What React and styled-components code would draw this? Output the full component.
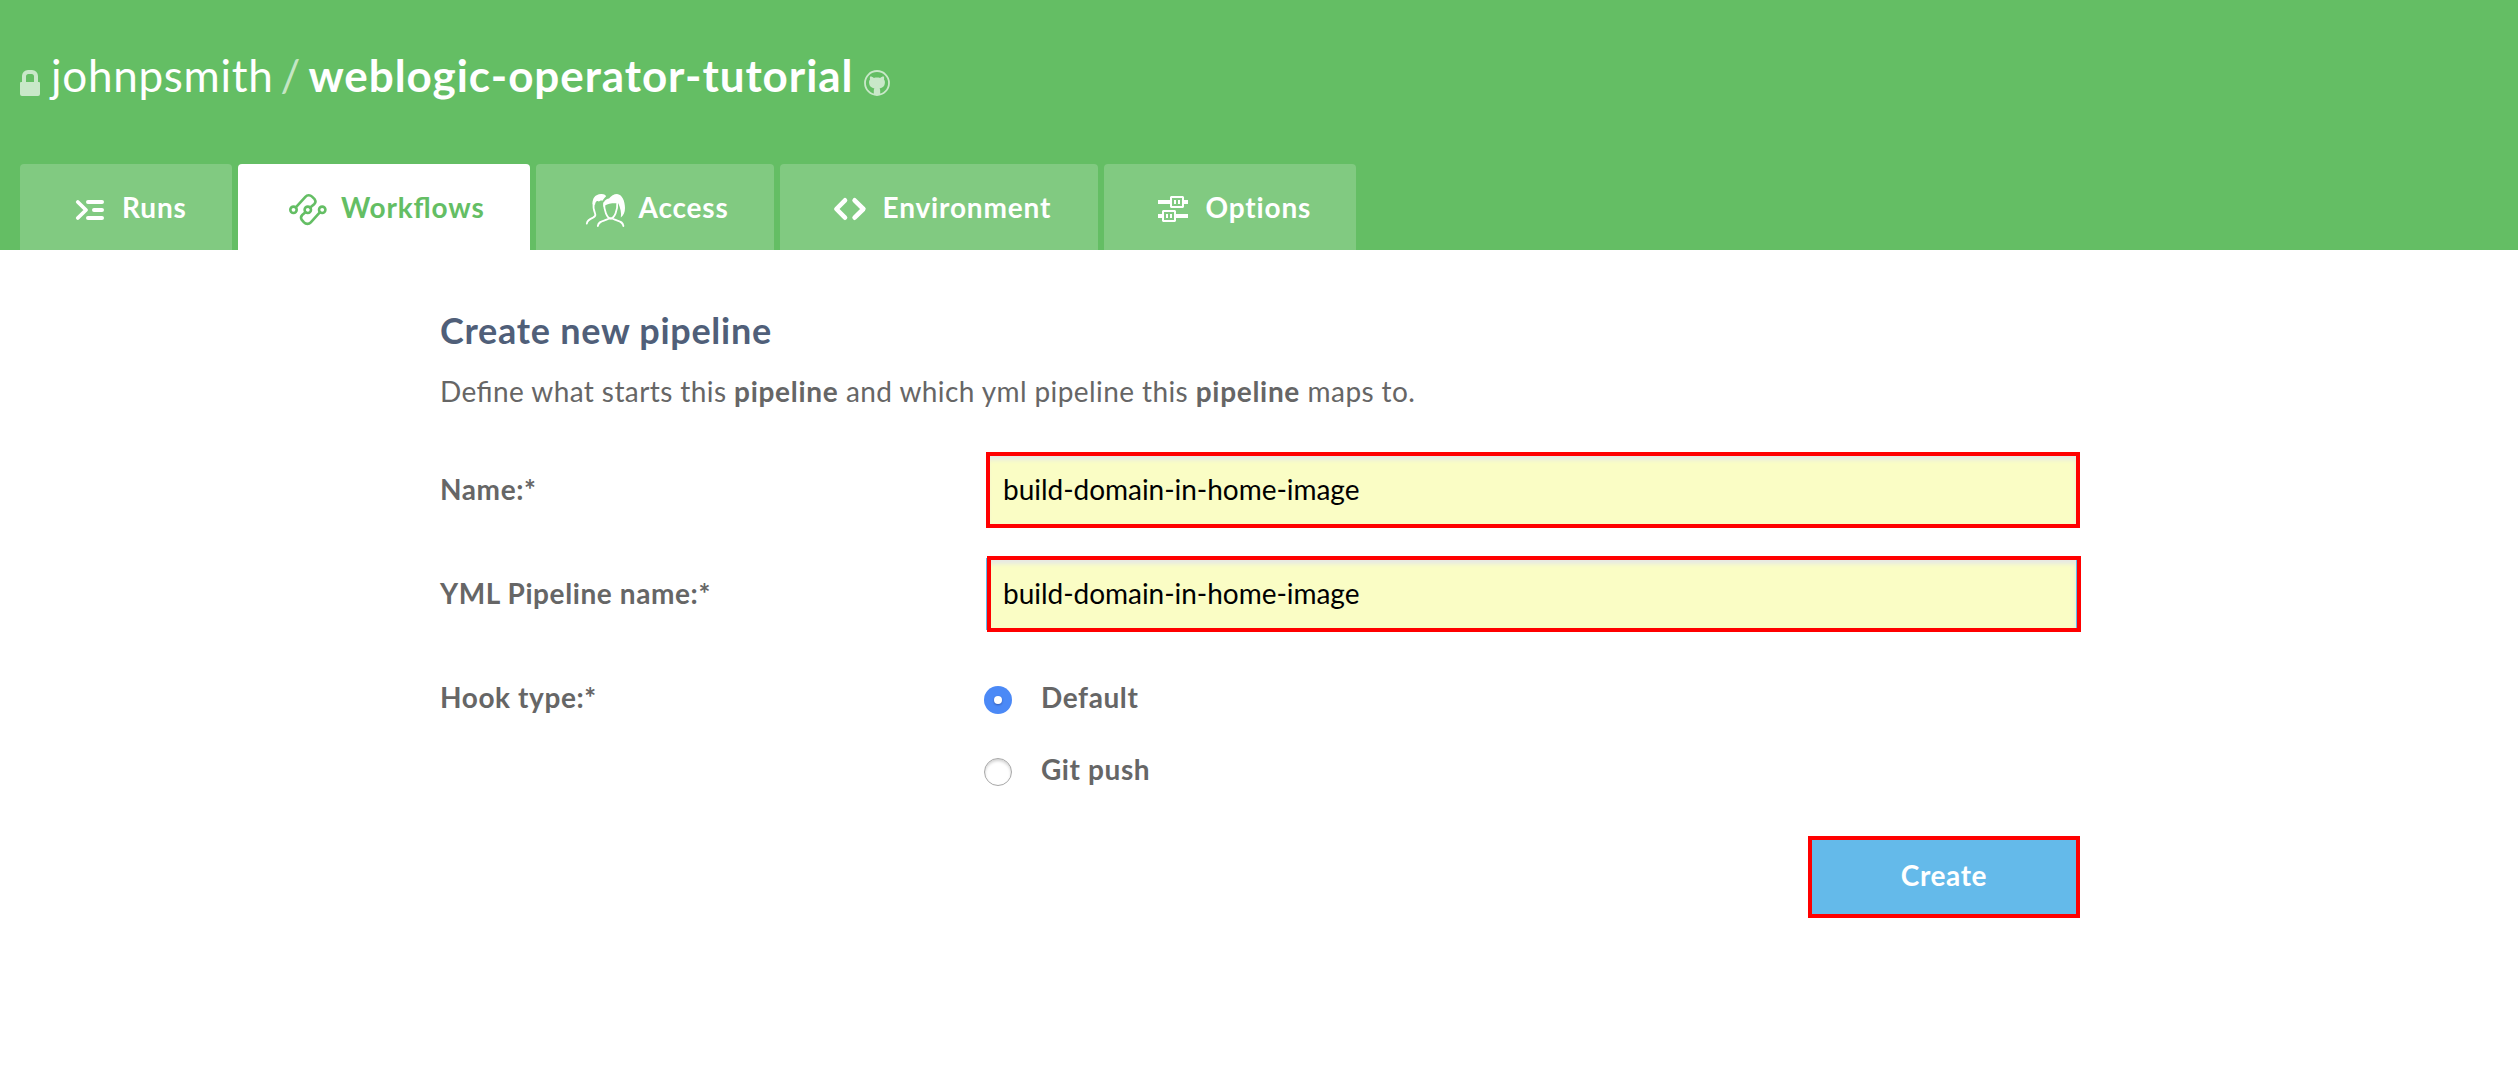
import React from 'react';
import styled, { createGlobalStyle, css } from 'styled-components';

const GlobalStyle = createGlobalStyle`
  *, *::before, *::after { box-sizing: border-box; }
  body {
    margin: 0;
    background: #fff;
    color: #666;
    font-family: Lato, "Open Sans", sans-serif;
    font-size: 28px;
    letter-spacing: 0.6px;
  }
`;

const Header = styled.header`
  height: 250px;
  padding: 48px 20px 0;
  display: flex;
  flex-direction: column;
  justify-content: space-between;
  background: #64be64;
`;
const Title = styled.h1`
  margin: 0;
  display: flex;
  align-items: flex-start;
  color: #fff;
  font-size: 44px;
  font-weight: 400;
  line-height: 54px;
  white-space: pre;
`;
const Owner = styled.span`margin-left: 11px; letter-spacing: 0.7px;`;
const Slash = styled.span`margin: 0 7.5px 0 7px; color: rgba(255, 255, 255, 0.65);`;
const Repo = styled.span`font-weight: 700; letter-spacing: 0.94px; margin-right: 11px;`;
const TitleIcon = styled.svg`margin-top: 22px; flex: none; opacity: 0.65;`;

const Tabs = styled.nav`display: flex; gap: 6px; letter-spacing: 0.84px;`;
const Tab = styled.a`
  width: ${(p) => p.$width}px;
  height: 86px;
  padding-left: 46px;
  display: flex;
  align-items: center;
  gap: 8px;
  border-radius: 4px 4px 0 0;
  font-weight: 700;
  line-height: 40px;
  color: #fff;
  background: rgba(255, 255, 255, 0.19);
  ${(p) => p.$active && css`color: #64be64; background: #fff; font-feature-settings: "liga" 1;`}
`;
const TabLabel = styled.span`margin-left: ${(p) => p.$nudge || 0}px;`;
const TabIcon = styled.svg`
  width: 48px;
  height: 48px;
  flex: none;
  fill: none;
  stroke: currentColor;
  stroke-linecap: round;
  stroke-linejoin: round;
`;

const Main = styled.main`width: 1640px; margin-left: 440px; padding-top: 58px;`;
const Heading = styled.h2`
  margin: 0 0 19px;
  color: #505f79;
  font-size: 36px;
  font-weight: 700;
  line-height: 44px;
  letter-spacing: 0.72px;
`;
const Intro = styled.p`
  margin: 0 0 43px;
  line-height: 40px;
  letter-spacing: 0.41px;
  font-feature-settings: "liga" 1;
  b { letter-spacing: 0.7px; }
`;
const Form = styled.form`display: flex; flex-direction: column; gap: 32px;`;
const Row = styled.div`display: grid; grid-template-columns: 546px 1092px; align-items: start;`;
const Label = styled.label`font-weight: 700; line-height: 70px;`;
const Field = styled.div`position: relative; height: 72px;`;
const Input = styled.input`
  display: block;
  width: 100%;
  height: 72px;
  padding: 0 15px 2px;
  border: 2px solid ${(p) => (p.$focused ? '#5cb8ec' : '#ddd')};
  background: #fafdc5;
  box-shadow: inset 0 4px 4px #e6e9e4;
  color: #000;
  font: 400 28px Lato, "Open Sans", sans-serif;
  letter-spacing: -0.03px;
  outline: none;
`;
const Frame = styled.span`
  position: absolute;
  top: -2px;
  left: ${(p) => p.$shift}px;
  width: 1094px;
  height: 76px;
  border: 4px solid #f00;
  pointer-events: none;
`;
const Choices = styled.div``;
const Choice = styled.label`
  height: 72px;
  padding-bottom: 2px;
  display: flex;
  align-items: center;
  gap: 29px;
  margin-left: -2px;
  font-weight: 700;
  line-height: 70px;
`;
const Radio = styled.span`
  width: 28px;
  height: 28px;
  margin-top: 6px;
  flex: none;
  display: grid;
  place-items: center;
  border-radius: 50%;
  ${(p) => p.$checked
    ? css`
        background: #4b89f6;
        &::after { content: ""; width: 8px; height: 8px; border-radius: 50%; background: #fff; box-shadow: 0 1px 2px rgba(0, 0, 60, 0.35); }
      `
    : css`
        background: #fff;
        border: 1px solid #a8a8a8;
        box-shadow: inset 0 2px 3px rgba(0, 0, 0, 0.18);
      `}
`;
const Actions = styled.div`display: flex; justify-content: flex-end; margin-top: -2px;`;
const Button = styled.button`
  width: 272px;
  height: 82px;
  padding: 0 0 4px;
  border: 4px solid #f00;
  background: #64baea;
  color: #fff;
  font: 700 28px Lato, "Open Sans", sans-serif;
  letter-spacing: 0.6px;
`;

const icons = {
  runs: (
    <>
      <path strokeWidth="3.8" d="M11.8 19 20 27l-8.2 8" />
      <path strokeWidth="4" d="M22 19H36M28 27H36M22 35H36" />
    </>
  ),
  workflows: (
    <g strokeWidth="2.6">
      <circle cx="9.5" cy="26.8" r="3.2" />
      <circle cx="23.8" cy="26.8" r="3.2" />
      <circle cx="38.2" cy="26.8" r="3.2" />
      <path d="M11.8 24.3 21.4 13.8A4.6 4.6 0 0 1 28 13.6L30.6 16.2A3.8 3.8 0 0 1 30.4 21L26.2 24.6" />
      <path d="M21.4 29.2 18.2 32A3.8 3.8 0 0 0 17.6 36.6L20 39.4A4.6 4.6 0 0 0 26.8 39.4L36 29.2" />
    </g>
  ),
  access: (
    <>
      <g strokeWidth="1.8">
        <path d="M11.8 18C10.8 24 12 28 13.2 31C14 33 13 33.6 11 34.6C7 36.4 5.2 37.4 4.8 40.6" />
        <path d="M22.2 20C21.8 27 25 35.4 28.7 35.4S35.8 27 35.2 20.4" />
        <path d="M15.8 43C16.4 39.4 18.6 38.6 22 37.6C24.6 36.8 26 35.6 28.7 35.4C31.4 35.6 32.8 36.8 35.4 37.6C38.8 38.6 40.8 39.4 41.4 43" />
      </g>
      <path fill="currentColor" stroke="none" d="M10.6 21C10.4 15 13 11.4 19 11C22 10.8 24 12 24 13.4C23 14.4 21.6 15.8 20.4 17.8C18.6 16.8 18.2 18 16.6 18.4C14.8 17.2 13.4 18.6 13 22Z" />
      <path fill="currentColor" stroke="none" d="M21.2 24C21 18.6 23.6 16 27 15.6C29 13 32 11 35 11C40 11.4 43 18 43 25C43 29.4 41.6 32.4 38.8 34.4C39.6 30 38.4 25 36.4 20.4C32.6 20 26.4 20 23 22.6Z" />
    </>
  ),
  environment: <path strokeWidth="4.6" d="M19 17.3 10.4 26l8.6 8.700M28.600 17.300 37.400 26l-8.800 8.700" />,
  options: (
    <g fill="currentColor" stroke="none">
      <path d="M8 17H20V21H8ZM34 17H38V21H34ZM8 31H12V35H8ZM26 31H38V35H26Z" />
      <path fillRule="evenodd" d="M21 13H33L34 14V24L33 25H21L20 24V14ZM22 15V23H32V15Z" />
      <path fillRule="evenodd" d="M13 27H25L26 28V38L25 39H13L12 38V28ZM14 29V37H24V29Z" />
      <path d="M24 17H26V21H24ZM28 17H30V21H28ZM16 31H18V35H16ZM20 31H22V35H20Z" />
    </g>
  ),
};

const tabs = [
  { id: 'runs', label: 'Runs', width: 212 },
  { id: 'workflows', label: 'Workflows', width: 292, nudge: 1, active: true },
  { id: 'access', label: 'Access', width: 238, nudge: 0.5 },
  { id: 'environment', label: 'Environment', width: 318, nudge: 0.5 },
  { id: 'options', label: 'Options', width: 252, nudge: -0.5 },
];

const fields = [
  { id: 'name', label: 'Name:*', shift: 0 },
  { id: 'yml-name', label: 'YML Pipeline name:*', shift: 1, focused: true },
];

export default function App() {
  return (
    <>
      <GlobalStyle />
      <Header>
        <Title>
          <TitleIcon width="20" height="26" viewBox="0 0 20 26">
            <path fill="#fff" d="M0 13a1 1 0 0 1 1-1H2V6a6 6 0 0 1 6-6h4a6 6 0 0 1 6 6v6h1a1 1 0 0 1 1 1V24a2 2 0 0 1-2 2H2a2 2 0 0 1-2-2ZM6 12h8V6.500A2.500 2.500 0 0 0 11.500 4h-3A2.500 2.500 0 0 0 6 6.500Z" />
          </TitleIcon>
          <Owner>johnpsmith</Owner>
          <Slash>/</Slash>
          <Repo>weblogic-operator-tutorial</Repo>
          <TitleIcon width="26" height="26" viewBox="0 0 26 26">
            <circle cx="13" cy="13" r="12" fill="none" stroke="#fff" strokeWidth="1.8" />
            <path fill="#fff" d="M6.200 6.600C7.600 6.500 8.900 7.300 9.800 7.900C11.800 7.500 14.200 7.500 16.200 7.900C17.100 7.300 18.400 6.500 19.800 6.600C20.300 7.800 20.200 8.800 20 9.600C20.800 10.600 21 11.700 20.900 13C20.700 16.400 18.600 18 15.600 18.400C16 19 16.200 19.600 16.200 20.400V24.600H9.800V20.400C9.800 19.600 10 19 10.400 18.400C7.400 18 5.300 16.400 5.100 13C5 11.700 5.200 10.600 6 9.600C5.800 8.800 5.700 7.800 6.200 6.600Z" />
          </TitleIcon>
        </Title>
        <Tabs>
          {tabs.map((t) => (
            <Tab key={t.id} $width={t.width} $active={t.active}>
              <TabIcon viewBox="0 0 48 48">{icons[t.id]}</TabIcon>
              <TabLabel $nudge={t.nudge}>{t.label}</TabLabel>
            </Tab>
          ))}
        </Tabs>
      </Header>
      <Main>
        <Heading>Create new pipeline</Heading>
        <Intro>
          Define what starts this <b>pipeline</b> and which yml pipeline this <b>pipeline</b> maps to.
        </Intro>
        <Form>
          {fields.map((f) => (
            <Row key={f.id}>
              <Label htmlFor={f.id}>{f.label}</Label>
              <Field>
                <Input id={f.id} $focused={f.focused} defaultValue="build-domain-in-home-image" />
                <Frame $shift={f.shift} />
              </Field>
            </Row>
          ))}
          <Row>
            <Label as="span">Hook type:*</Label>
            <Choices>
              <Choice><Radio $checked />Default</Choice>
              <Choice><Radio />Git push</Choice>
            </Choices>
          </Row>
          <Actions><Button type="button">Create</Button></Actions>
        </Form>
      </Main>
    </>
  );
}
